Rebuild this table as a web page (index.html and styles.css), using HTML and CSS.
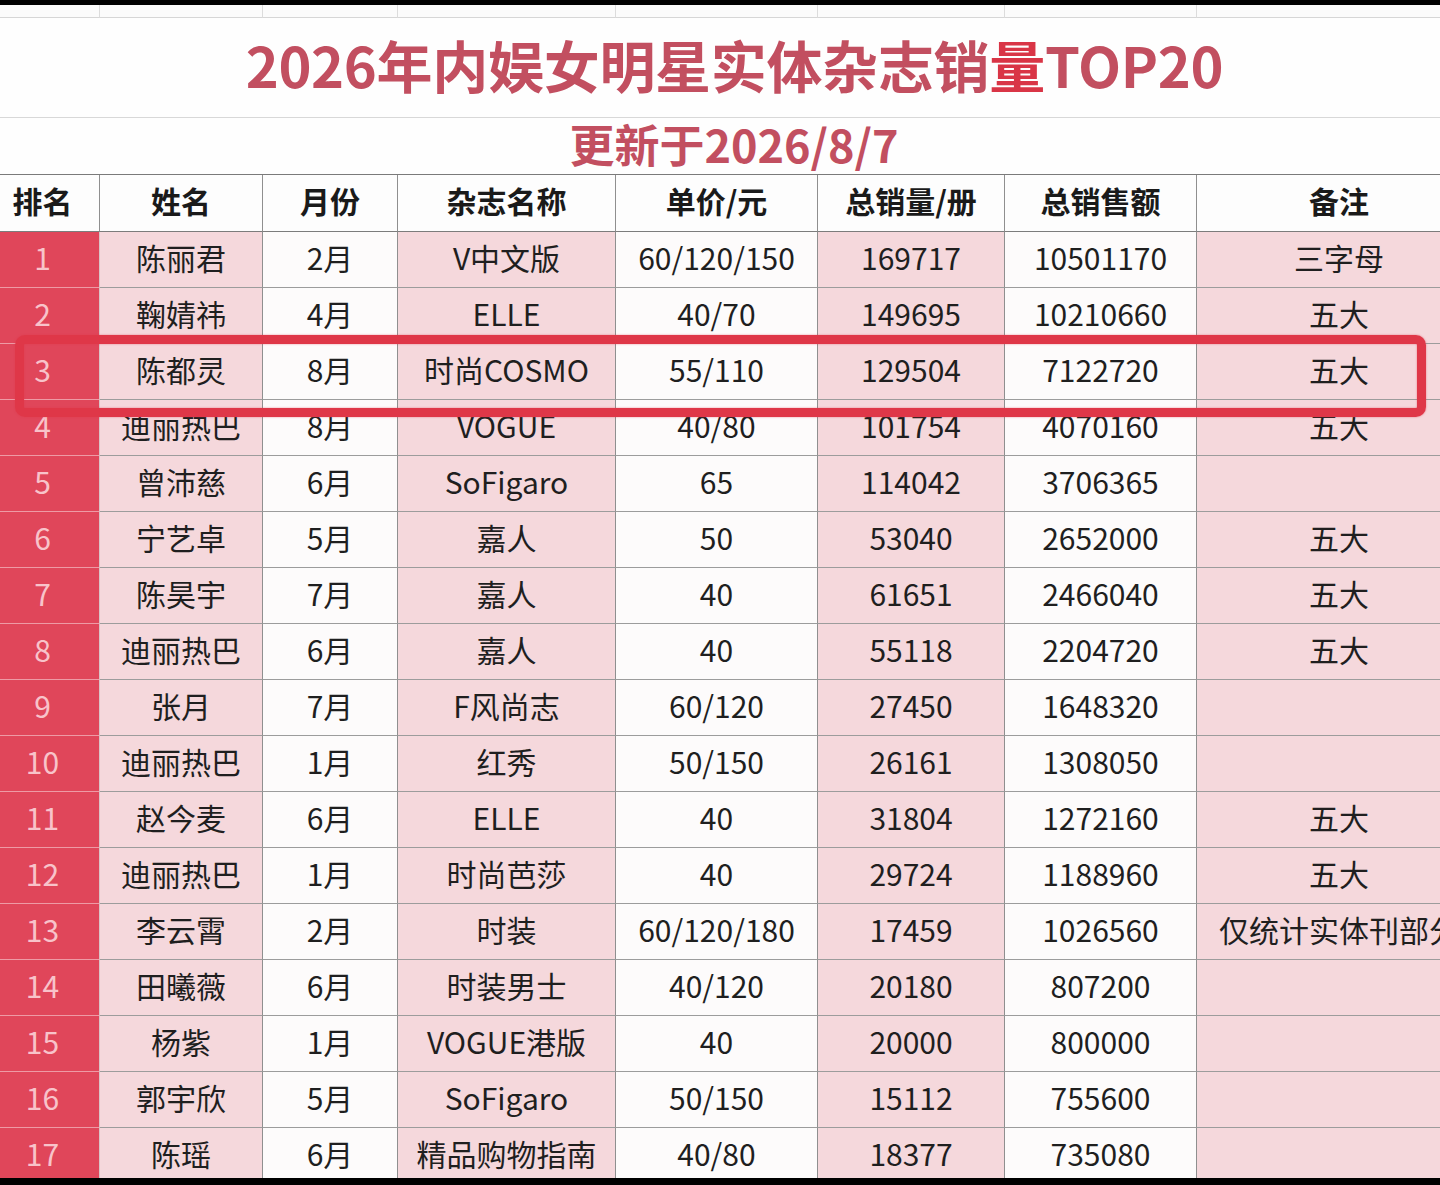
FILE: index.html
```html
<!DOCTYPE html>
<html lang="zh-CN">
<head>
<meta charset="utf-8">
<title>2026年内娱女明星实体杂志销量TOP20</title>
<link rel="stylesheet" href="styles.css">
</head>
<body>
<div class="screen">
  <div class="sheet">
    <div class="grid">
      <div class="c top"></div><div class="c top"></div><div class="c top"></div><div class="c top"></div><div class="c top"></div><div class="c top"></div><div class="c top"></div><div class="c top"></div>
      <div class="title">2026年内娱女明星实体杂志销<span class="hot">量</span>TOP20</div>
      <div class="subtitle">更新于2026/8/7</div>
      <div class="c h first">排名</div><div class="c h">姓名</div><div class="c h">月份</div><div class="c h">杂志名称</div><div class="c h">单价/元</div><div class="c h">总销量/册</div><div class="c h">总销售额</div><div class="c h">备注</div>

      <div class="c r">1</div><div class="c p">陈丽君</div><div class="c w">2月</div><div class="c p">V中文版</div><div class="c w">60/120/150</div><div class="c p">169717</div><div class="c w">10501170</div><div class="c p">三字母</div>
      <div class="c r">2</div><div class="c p">鞠婧祎</div><div class="c w">4月</div><div class="c p">ELLE</div><div class="c w">40/70</div><div class="c p">149695</div><div class="c w">10210660</div><div class="c p">五大</div>
      <div class="c r">3</div><div class="c p">陈都灵</div><div class="c w">8月</div><div class="c p">时尚COSMO</div><div class="c w">55/110</div><div class="c p">129504</div><div class="c w">7122720</div><div class="c p">五大</div>
      <div class="c r">4</div><div class="c p">迪丽热巴</div><div class="c w">8月</div><div class="c p">VOGUE</div><div class="c w">40/80</div><div class="c p">101754</div><div class="c w">4070160</div><div class="c p">五大</div>
      <div class="c r">5</div><div class="c p">曾沛慈</div><div class="c w">6月</div><div class="c p">SoFigaro</div><div class="c w">65</div><div class="c p">114042</div><div class="c w">3706365</div><div class="c p"></div>
      <div class="c r">6</div><div class="c p">宁艺卓</div><div class="c w">5月</div><div class="c p">嘉人</div><div class="c w">50</div><div class="c p">53040</div><div class="c w">2652000</div><div class="c p">五大</div>
      <div class="c r">7</div><div class="c p">陈昊宇</div><div class="c w">7月</div><div class="c p">嘉人</div><div class="c w">40</div><div class="c p">61651</div><div class="c w">2466040</div><div class="c p">五大</div>
      <div class="c r">8</div><div class="c p">迪丽热巴</div><div class="c w">6月</div><div class="c p">嘉人</div><div class="c w">40</div><div class="c p">55118</div><div class="c w">2204720</div><div class="c p">五大</div>
      <div class="c r">9</div><div class="c p">张月</div><div class="c w">7月</div><div class="c p">F风尚志</div><div class="c w">60/120</div><div class="c p">27450</div><div class="c w">1648320</div><div class="c p"></div>
      <div class="c r">10</div><div class="c p">迪丽热巴</div><div class="c w">1月</div><div class="c p">红秀</div><div class="c w">50/150</div><div class="c p">26161</div><div class="c w">1308050</div><div class="c p"></div>
      <div class="c r">11</div><div class="c p">赵今麦</div><div class="c w">6月</div><div class="c p">ELLE</div><div class="c w">40</div><div class="c p">31804</div><div class="c w">1272160</div><div class="c p">五大</div>
      <div class="c r">12</div><div class="c p">迪丽热巴</div><div class="c w">1月</div><div class="c p">时尚芭莎</div><div class="c w">40</div><div class="c p">29724</div><div class="c w">1188960</div><div class="c p">五大</div>
      <div class="c r">13</div><div class="c p">李云霄</div><div class="c w">2月</div><div class="c p">时装</div><div class="c w">60/120/180</div><div class="c p">17459</div><div class="c w">1026560</div><div class="c p">仅统计实体刊部分</div>
      <div class="c r">14</div><div class="c p">田曦薇</div><div class="c w">6月</div><div class="c p">时装男士</div><div class="c w">40/120</div><div class="c p">20180</div><div class="c w">807200</div><div class="c p"></div>
      <div class="c r">15</div><div class="c p">杨紫</div><div class="c w">1月</div><div class="c p">VOGUE港版</div><div class="c w">40</div><div class="c p">20000</div><div class="c w">800000</div><div class="c p"></div>
      <div class="c r">16</div><div class="c p">郭宇欣</div><div class="c w">5月</div><div class="c p">SoFigaro</div><div class="c w">50/150</div><div class="c p">15112</div><div class="c w">755600</div><div class="c p"></div>
      <div class="c r">17</div><div class="c p">陈瑶</div><div class="c w">6月</div><div class="c p">精品购物指南</div><div class="c w">40/80</div><div class="c p">18377</div><div class="c w">735080</div><div class="c p"></div>
    </div>
  </div>
  <div class="highlight"></div>
</div>
</body>
</html>
```

FILE: styles.css
```css
* { box-sizing: border-box; }

html, body {
  margin: 0;
  padding: 0;
  background: #000;
}

body {
  font-family: "Noto Sans CJK SC", "Noto Sans", sans-serif;
  color: #1f1f1f;
}

.screen {
  position: relative;
  width: 1440px;
  height: 1185px;
  overflow: hidden;
  background: #000;
}

.sheet {
  margin-top: 5px;
  width: 1440px;
  height: 1173px;
  overflow: hidden;
  background: #fdfdfd;
}

.grid {
  display: grid;
  width: 1482px;
  grid-template-columns: 100px 163px 135px 218px 202px 187px 192px 285px;
  grid-template-rows: 13px 100px 57px 57px;
  grid-auto-rows: 56px;
}

.c {
  display: flex;
  align-items: center;
  justify-content: center;
  border-right: 1px solid #8f8f8f;
  border-bottom: 1px solid #9c9c9c;
  font-size: 30px;
  line-height: 1;
  white-space: nowrap;
  padding-bottom: 6px;
}

.top {
  border-right: 1px solid #dcdcdc;
  border-bottom: 1px solid #d6d6d6;
  background: #fbfbfb;
  padding-bottom: 0;
}

.title {
  grid-column: 1 / -1;
  display: flex;
  align-items: center;
  justify-content: center;
  font-size: 56px;
  font-weight: 700;
  color: #c24f60;
  letter-spacing: -0.3px;
  border-bottom: 1px solid #d8d8d8;
  background: #fefefe;
  padding-bottom: 8px;
  padding-right: 13px;
}

.title .hot {
  color: #d93546;
}

.subtitle {
  grid-column: 1 / -1;
  display: flex;
  align-items: center;
  justify-content: center;
  font-size: 45px;
  font-weight: 700;
  color: #c24f60;
  border-bottom: 1px solid #7a7a7a;
  background: #fefefe;
  padding-bottom: 6px;
  padding-right: 14px;
}

.h {
  font-weight: 700;
  background: #fdfdfd;
  color: #1a1a1a;
  border-bottom-color: #7c7c7c;
}

.first,
.r {
  padding-right: 14px;
}

.r {
  background: #e0465a;
  color: #f8c3ca;
  border-right-color: #d9c3c6;
  border-bottom-color: #ee9aa5;
}

.p {
  background: #f5d8dc;
}

.w {
  background: #fdfbfb;
}

.highlight {
  position: absolute;
  left: 15px;
  top: 335px;
  width: 1411px;
  height: 82px;
  border: 9px solid #df3748;
  border-radius: 10px;
  box-shadow: 0 0 2px rgba(223, 55, 72, 0.6), inset 0 0 2px rgba(223, 55, 72, 0.6);
}
```
